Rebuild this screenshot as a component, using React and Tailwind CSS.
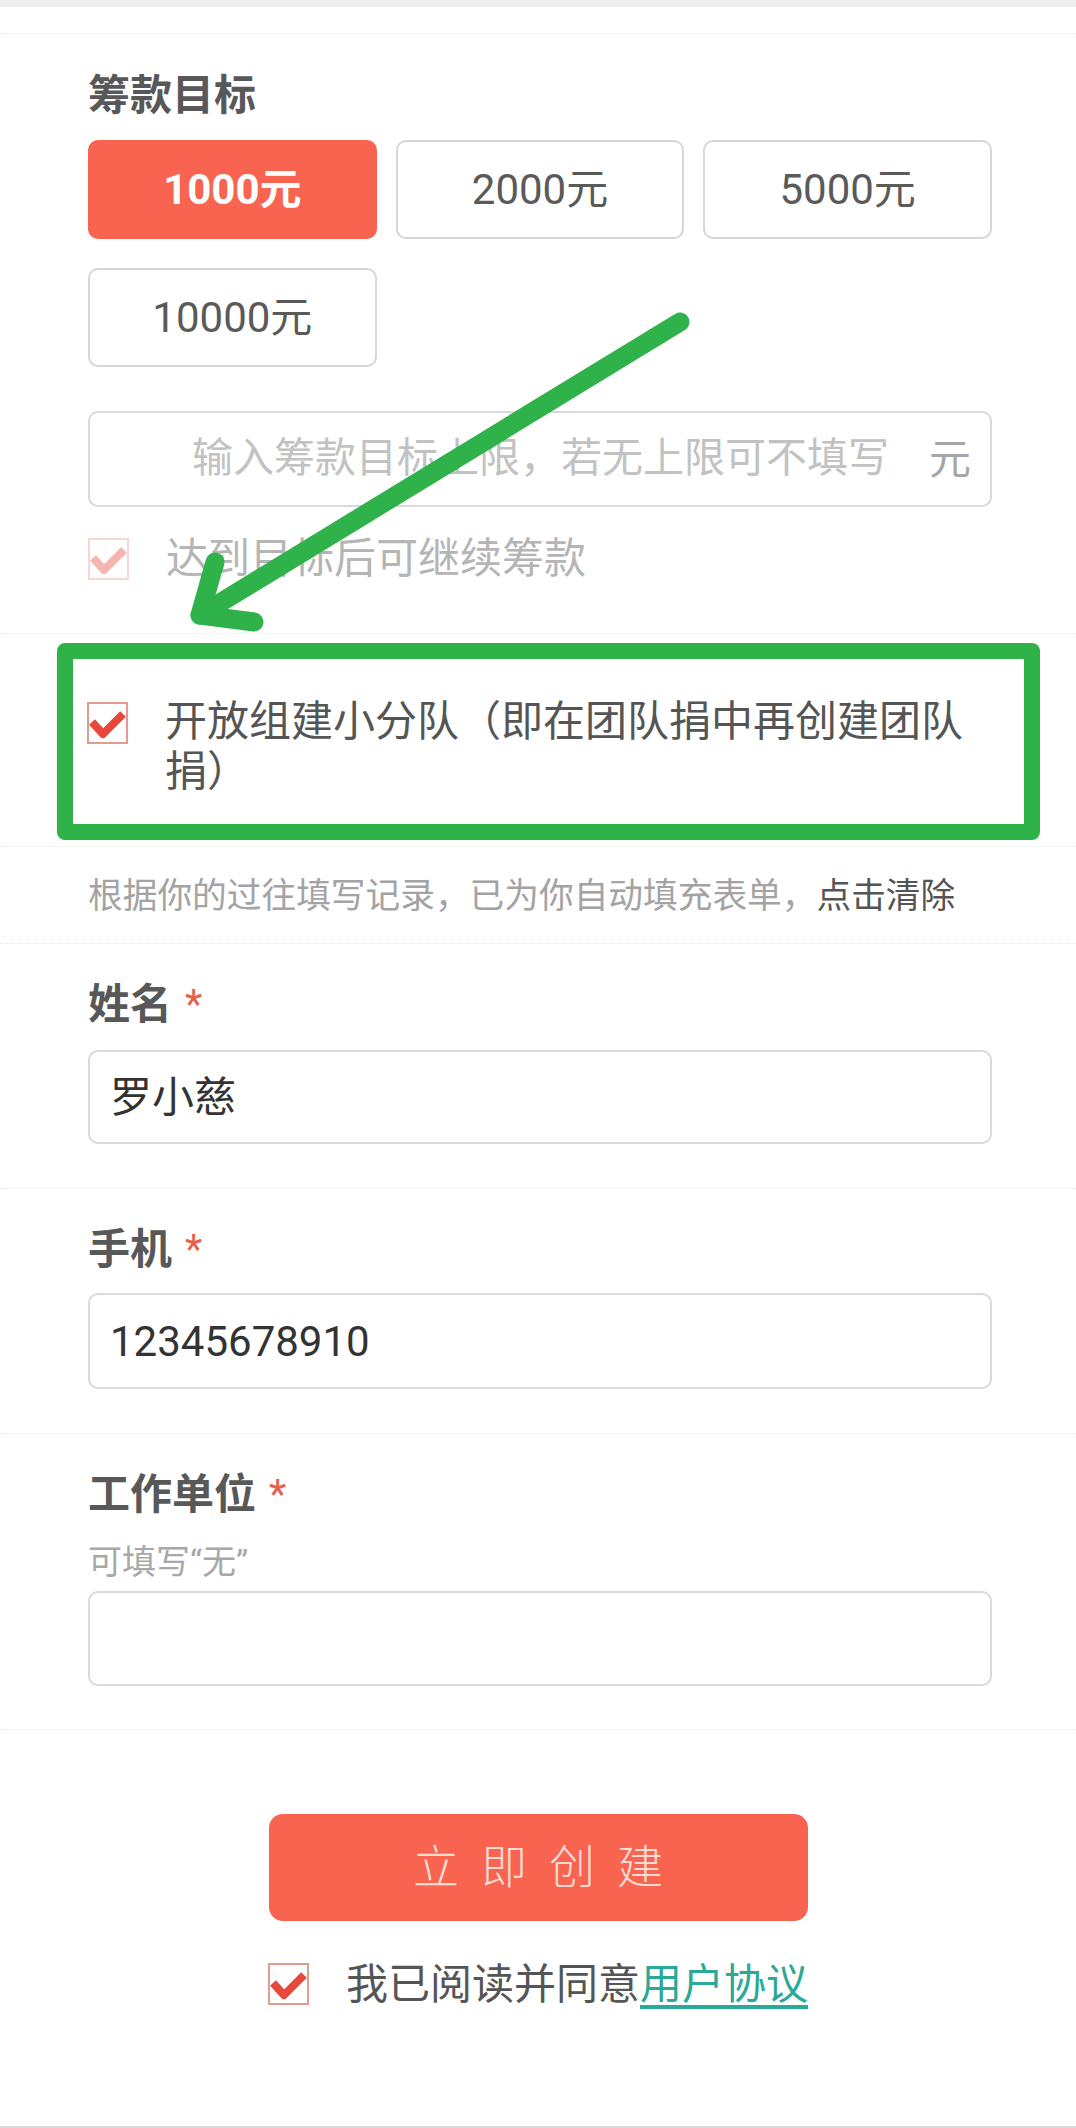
import React from "react";

function Check({ dim }) {
    return (
        <svg
            width="41"
            height="42"
            viewBox="0 0 41 42"
            className={dim ? "shrink-0 opacity-40" : "shrink-0"}
        >
            <rect x="1" y="1" width="39" height="40" fill="white" stroke="#e59a90" strokeWidth="2" />
            <path d="M5 20 L16 32 L36 12" fill="none" stroke="#e8483b" strokeWidth="8" strokeLinejoin="round" />
        </svg>
    );
}

function Sep() {
    return <div className="border-t border-dotted border-[#e8e8e8]" />;
}

function Label({ children }) {
    return (
        <div className="flex items-start text-[42px] leading-[52px]">
            <span className="font-bold text-[#585858]">{children}</span>
            <span className="ml-[13px] text-[40px] text-[#e8604c]">*</span>
        </div>
    );
}

function Field({ value, className }) {
    return (
        <div className={`flex items-center rounded-[10px] border-2 border-[#d9d9d9] ${className}`}>
            <input
                readOnly
                value={value}
                className="w-full bg-transparent pl-[20px] text-[42px] text-[#333] outline-none"
            />
        </div>
    );
}

const amounts = ["1000元", "2000元", "5000元", "10000元"];

export default function App() {
    return (
        <div className="relative w-[1076px] h-[2128px] overflow-hidden bg-white font-['Roboto','Noto_Sans_CJK_SC',sans-serif]">
            <div className="h-[7px] bg-[#efefef]" />
            <div className="h-[26px]" />
            <Sep />

            {/* 筹款目标 */}
            <section className="pl-[88px] pr-[84px] pt-[36px] pb-[53px]">
                <h2 className="text-[42px] leading-[52px] font-bold text-[#585858]">筹款目标</h2>
                <div className="mt-[18px] grid grid-cols-3 gap-x-[19px] gap-y-[29px]">
                    {amounts.map((a, i) => (
                        <button
                            key={a}
                            className={
                                i === 0
                                    ? "h-[99px] rounded-[10px] bg-[#f8644f] text-[42px] font-bold text-white"
                                    : "h-[99px] rounded-[10px] border-2 border-[#d6d6d6] bg-white text-[42px] text-[#5a5a5a]"
                            }
                        >
                            {a}
                        </button>
                    ))}
                </div>
                <div className="mt-[44px] flex h-[96px] items-center rounded-[10px] border-2 border-[#d9d9d9]">
                    <input
                        placeholder="输入筹款目标上限，若无上限可不填写"
                        className="min-w-0 flex-1 bg-transparent text-right text-[41px] text-[#333] outline-none placeholder:text-[#c2c2c2]"
                    />
                    <span className="ml-[40px] mr-[19px] text-[42px] text-[#a6a6a6]">元</span>
                </div>
                <div className="mt-[31px] flex items-center gap-[37px]">
                    <Check dim />
                    <span className="text-[42px] leading-[42px] text-[#b5b5b5]">达到目标后可继续筹款</span>
                </div>
            </section>
            <Sep />

            {/* 小分队 */}
            <section className="pl-[87px] pr-[84px] pt-[63px] pb-[49px]">
                <div className="flex items-start gap-[37px]">
                    <div className="mt-[5px]">
                        <Check />
                    </div>
                    <p className="text-[42px] leading-[50px] text-[#555]">
                        开放组建小分队（即在团队捐中再创建团队捐）
                    </p>
                </div>
            </section>
            <Sep />

            <section className="pl-[88px] pr-[60px] pt-[25px] pb-[23px]">
                <p className="whitespace-nowrap text-[34.7px] leading-[48px] text-[#a3a3a3]">
                    根据你的过往填写记录，已为你自动填充表单，<span className="text-[#555]">点击清除</span>
                </p>
            </section>
            <Sep />

            <section className="pl-[88px] pr-[84px] pt-[35px] pb-[44px]">
                <Label>姓名</Label>
                <Field value="罗小慈" className="mt-[19px] h-[94px]" />
            </section>
            <Sep />

            <section className="pl-[88px] pr-[84px] pt-[35px] pb-[44px]">
                <Label>手机</Label>
                <Field value="12345678910" className="mt-[17px] h-[96px]" />
            </section>
            <Sep />

            <section className="pl-[88px] pr-[84px] pt-[35px] pb-[43px]">
                <Label>工作单位</Label>
                <p className="mt-[19px] text-[34px] leading-[44px] text-[#a8a8a8]">可填写“无”</p>
                <Field value="" className="mt-[7px] h-[95px]" />
            </section>
            <Sep />

            <div className="mt-[84px] flex justify-center">
                <button className="h-[107px] w-[539px] rounded-[14px] bg-[#f8644f] pl-[22px] text-[46px] font-light tracking-[22px] text-[#fcdcd3]">
                    立即创建
                </button>
            </div>
            <div className="mt-[41px] flex h-[44px] items-center justify-center gap-[37px]">
                <Check />
                <span className="text-[42px] text-[#555]">
                    我已阅读并同意<span className="text-[#2aa996] underline underline-offset-[6px]">用户协议</span>
                </span>
            </div>
            <div className="h-[120px]" />
            <div className="h-[2px] bg-[#dcdcdc]" />

            {/* annotation overlays */}
            <div className="pointer-events-none absolute left-[57px] top-[643px] h-[197px] w-[983px] rounded-[8px] border-[16px] border-[#2fb24a]" />
            <svg
                className="pointer-events-none absolute left-[180px] top-[300px]"
                width="520"
                height="340"
                viewBox="0 0 520 340"
            >
                <g fill="none" stroke="#2fb24a" strokeWidth="19" strokeLinecap="round" strokeLinejoin="round">
                    <path d="M500 22 L20 315" />
                    <path d="M35 262 L20 315 L74 322" />
                </g>
            </svg>
        </div>
    );
}
